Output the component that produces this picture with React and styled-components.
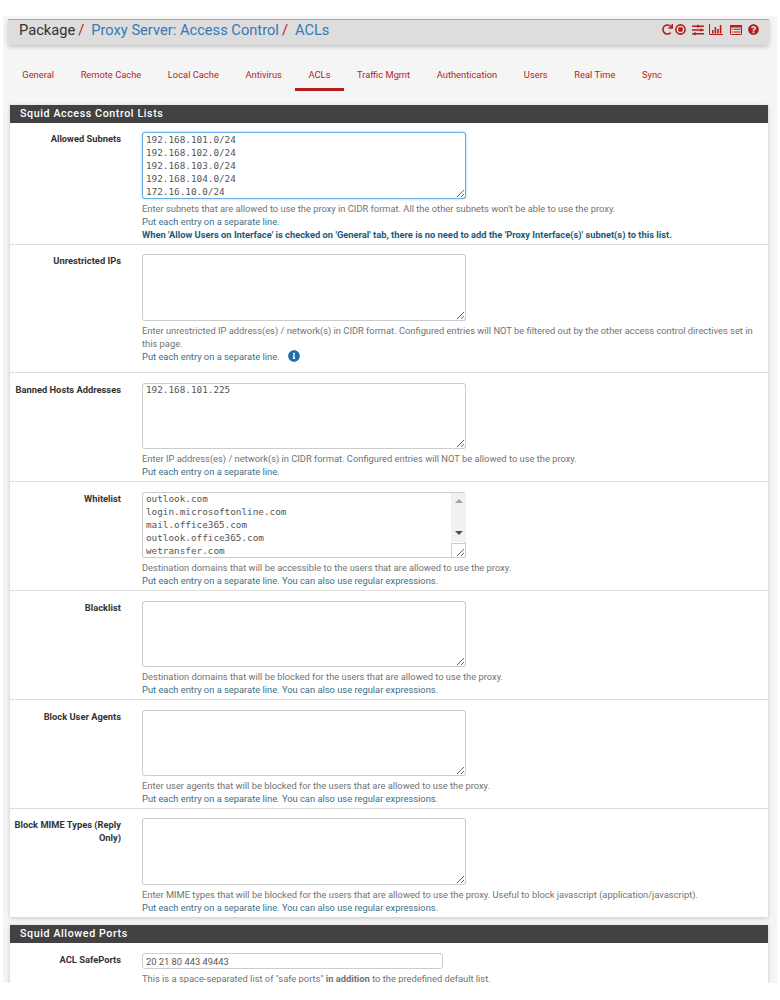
import React from 'react';
import styled, { createGlobalStyle } from 'styled-components';
import { FaRedo, FaSlidersH, FaQuestionCircle, FaInfoCircle } from 'react-icons/fa';

const GlobalStyle = createGlobalStyle`
	html, body {
		margin: 0;
		padding: 0;
		background: #fff;
		overflow: hidden;
		height: 1000px;
	}
	body {
		font-family: Roboto, "Liberation Sans", sans-serif;
	}
`;

const Page = styled.div`
	margin: 16px 3px 0;
	width: 774px;
	height: 967px;
	overflow: hidden;
	background: #f5f5f5;
	padding-top: 3px;
	box-sizing: border-box;
`;

const Header = styled.div`
	margin: 0 8px 0 5px;
	height: 26px;
	background: #ddd;
	border-top: 1px solid #aaa;
	border-radius: 0 0 4px 4px;
	box-shadow: 0 2px 4px rgba(0, 0, 0, 0.2);
	box-sizing: border-box;
	padding: 0 10px 6px 11px;
	display: flex;
	align-items: center;
	justify-content: space-between;
`;

const Crumbs = styled.div`
	display: flex;
	align-items: center;
	font-size: 14.67px;
	color: #333;
`;

const Crumb = styled.span`
	color: ${(p) => (p.$link ? '#337ab7' : '#333')};
`;

const Slash = styled.span`
	color: #b71c1c;
	margin: 0 7px 0 3px;
`;

const Icons = styled.div`
	display: flex;
	align-items: center;
	color: #b71c1c;
`;

const IconSlot = styled.span`
	display: inline-flex;
	margin-left: ${(p) => p.$gap}px;
`;

const Tabs = styled.div`
	display: flex;
	margin: 17px 0 14px 6px;
	height: 29px;
`;

const Tab = styled.div`
	padding: 0 13.3px;
	height: 29px;
	line-height: 25px;
	font-size: 9.33px;
	color: #b71c1c;
	box-sizing: border-box;
	border-bottom: 3px solid ${(p) => (p.$active ? '#b71c1c' : 'transparent')};
`;

const Panel = styled.section`
	margin: 0 9px 8px 7px;
	background: #fff;
	box-shadow: 0 1px 4px rgba(0, 0, 0, 0.2);
`;

const Heading = styled.h2`
	margin: 0;
	height: 18px;
	line-height: 18px;
	background: #424242;
	color: #fff;
	font-size: 10.67px;
	font-weight: 500;
	letter-spacing: 0.6px;
	padding-left: 10px;
`;

const Row = styled.div`
	display: flex;
	box-sizing: border-box;
	height: ${(p) => p.$height}px;
	padding: ${(p) => (p.$tight ? 9 : 10)}px 0 0 3px;
	border-bottom: 1px solid #ddd;

	&:last-child {
		border-bottom: 0;
	}
`;

const Label = styled.label`
	width: 108px;
	flex: none;
	text-align: right;
	font-size: 9.33px;
	font-weight: 700;
	line-height: 13px;
	color: #333;
	margin-right: 21px;
`;

const Field = styled.div`
	flex: 1;
	min-width: 0;
	padding-right: 14px;
`;

const AreaWrap = styled.div`
	position: relative;
	width: 324px;
	height: ${(p) => (p.$tight ? 67 : 66)}px;
`;

// top border comes from the inset shadow so the first line sits 1px higher
const Area = styled.textarea`
	display: block;
	width: 324px;
	height: ${(p) => (p.$tight ? 67 : 66)}px;
	box-sizing: border-box;
	margin: 0;
	padding: ${(p) => (p.$tight ? 1 : 0)}px 3px 0;
	font-family: "DejaVu Sans Mono", monospace;
	font-size: 9.33px;
	line-height: 13px;
	color: #555;
	background: #fff;
	border: 1px solid ${(p) => (p.$focus ? '#66afe9' : '#ccc')};
	border-top: 0;
	border-radius: 3px;
	outline: none;
	box-shadow: ${(p) =>
		p.$focus
			? 'inset 0 1px 0 #66afe9, 0 0 3px rgba(102,175,233,.6)'
			: 'inset 0 1px 0 #ccc'};
	overflow: hidden;
`;

const ScrollTrack = styled.div`
	position: absolute;
	top: 1px;
	right: 0;
	bottom: 16px;
	width: 15px;
	background: #f1f1f1;
	display: flex;
	flex-direction: column;
	align-items: center;
	justify-content: space-between;
	padding: 6px 0 7px;
	box-sizing: border-box;
`;

const Arrow = styled.span`
	width: 0;
	height: 0;
	border-left: 4px solid transparent;
	border-right: 4px solid transparent;
	border-${(p) => (p.$up ? 'bottom' : 'top')}: 4px solid ${(p) => (p.$up ? '#a3a3a3' : '#505050')};
`;

const ScrollCorner = styled.div`
	position: absolute;
	right: 0;
	bottom: 0;
	width: 15px;
	height: 15px;
	border-left: 1px solid #ccc;
	border-top: 1px solid #ccc;
	box-sizing: border-box;
	pointer-events: none;
`;

const TextInput = styled.input`
	display: block;
	width: 301px;
	height: 16px;
	box-sizing: border-box;
	margin: 0;
	padding: 0 3px;
	font-family: Roboto, sans-serif;
	font-size: 9.33px;
	color: #555;
	border: 1px solid #ccc;
	border-radius: 3px;
	outline: none;
`;

const Help = styled.div`
	margin-top: 3px;
	font-size: 9.33px;
	line-height: 13px;
	color: #737373;
`;

const Line = styled.div`
	color: ${(p) => (p.$strong ? '#1b5a7a' : p.$put ? '#3b6f8c' : '#737373')};
	font-weight: ${(p) => (p.$strong ? 700 : 400)};
`;

const Info = styled.span`
	display: inline-flex;
	vertical-align: -2px;
	margin-left: 8px;
	color: #1a6fa8;
`;

const StopIcon = () => (
	<svg width="11" height="11" viewBox="0 0 11 11">
		<circle cx="5.5" cy="5.5" r="4.6" fill="none" stroke="currentColor" strokeWidth="1.6" />
		<rect x="3.3" y="3.3" width="4.4" height="4.4" rx="1" fill="currentColor" />
	</svg>
);

const ChartIcon = () => (
	<svg width="14" height="11" viewBox="0 0 14 11">
		<path d="M0.5 0V10.5H14" fill="none" stroke="currentColor" />
		<path d="M3 6h1.6v3.5H3zM5.6 3h1.6v6.5H5.6zM8.2 5h1.6v4.5H8.2zM10.8 1h1.6v8.5h-1.6z" fill="currentColor" />
	</svg>
);

const ListIcon = () => (
	<svg width="12" height="10" viewBox="0 0 12 10">
		<rect x="0.5" y="0.5" width="11" height="9" rx="0.6" fill="none" stroke="currentColor" />
		<path d="M0 0h12v2.5H0z" fill="currentColor" />
		<path d="M1.5 3.8h1.2v1H1.5zM3.6 3.8h6.9v1H3.6zM1.5 6.4h1.2v1H1.5zM3.6 6.4h6.9v1H3.6z" fill="currentColor" />
	</svg>
);

const rows = [
	{
		label: 'Allowed Subnets',
		height: 122,
		tight: true,
		value: '192.168.101.0/24\n192.168.102.0/24\n192.168.103.0/24\n192.168.104.0/24\n172.16.10.0/24',
		focus: true,
		help: "Enter subnets that are allowed to use the proxy in CIDR format. All the other subnets won't be able to use the proxy.",
		put: 'Put each entry on a separate line.',
		strong: "When 'Allow Users on Interface' is checked on 'General' tab, there is no need to add the 'Proxy Interface(s)' subnet(s) to this list.",
	},
	{
		label: 'Unrestricted IPs',
		height: 128,
		tight: true,
		value: '',
		help: 'Enter unrestricted IP address(es) / network(s) in CIDR format. Configured entries will NOT be filtered out by the other access control directives set in this page.',
		put: 'Put each entry on a separate line.',
		info: true,
	},
	{
		label: 'Banned Hosts Addresses',
		height: 109,
		value: '192.168.101.225',
		help: 'Enter IP address(es) / network(s) in CIDR format. Configured entries will NOT be allowed to use the proxy.',
		put: 'Put each entry on a separate line.',
	},
	{
		label: 'Whitelist',
		height: 109,
		value: 'outlook.com\nlogin.microsoftonline.com\nmail.office365.com\noutlook.office365.com\nwetransfer.com',
		scroll: true,
		help: 'Destination domains that will be accessible to the users that are allowed to use the proxy.',
		put: 'Put each entry on a separate line. You can also use regular expressions.',
	},
	{
		label: 'Blacklist',
		height: 109,
		value: '',
		help: 'Destination domains that will be blocked for the users that are allowed to use the proxy.',
		put: 'Put each entry on a separate line. You can also use regular expressions.',
	},
	{
		label: 'Block User Agents',
		height: 109,
		value: '',
		help: 'Enter user agents that will be blocked for the users that are allowed to use the proxy.',
		put: 'Put each entry on a separate line. You can also use regular expressions.',
	},
	{
		label: 'Block MIME Types (Reply Only)',
		height: 108,
		tight: true,
		value: '',
		help: 'Enter MIME types that will be blocked for the users that are allowed to use the proxy. Useful to block javascript (application/javascript).',
		put: 'Put each entry on a separate line. You can also use regular expressions.',
	},
];

const tabs = ['General', 'Remote Cache', 'Local Cache', 'Antivirus', 'ACLs', 'Traffic Mgmt', 'Authentication', 'Users', 'Real Time', 'Sync'];

const App = () => {
	return (
		<>
			<GlobalStyle />
			<Page>
				<Header>
					<Crumbs>
						<Crumb>Package</Crumb>
						<Slash>/</Slash>
						<Crumb $link>Proxy Server: Access Control</Crumb>
						<Slash>/</Slash>
						<Crumb $link>ACLs</Crumb>
					</Crumbs>
					<Icons>
						<IconSlot $gap={0}><FaRedo size={11} /></IconSlot>
						<IconSlot $gap={2}><StopIcon /></IconSlot>
						<IconSlot $gap={6}><FaSlidersH size={12} /></IconSlot>
						<IconSlot $gap={5}><ChartIcon /></IconSlot>
						<IconSlot $gap={7}><ListIcon /></IconSlot>
						<IconSlot $gap={6}><FaQuestionCircle size={11} /></IconSlot>
					</Icons>
				</Header>
				<Tabs>
					{tabs.map((t) => (
						<Tab key={t} $active={t === 'ACLs'}>
							{t}
						</Tab>
					))}
				</Tabs>
				<Panel>
					<Heading>Squid Access Control Lists</Heading>
					{rows.map((r) => (
						<Row key={r.label} $height={r.height} $tight={r.tight}>
							<Label>{r.label}</Label>
							<Field>
								<AreaWrap $tight={r.tight}>
									<Area readOnly defaultValue={r.value} $focus={r.focus} $tight={r.tight} />
									{r.scroll && (
										<>
											<ScrollTrack>
												<Arrow $up />
												<Arrow />
											</ScrollTrack>
											<ScrollCorner />
										</>
									)}
								</AreaWrap>
								<Help>
									<Line>{r.help}</Line>
									<Line $put>
										{r.put}
										{r.info && (
											<Info>
												<FaInfoCircle size={12} />
											</Info>
										)}
									</Line>
									{r.strong && <Line $strong>{r.strong}</Line>}
								</Help>
							</Field>
						</Row>
					))}
				</Panel>
				<Panel>
					<Heading>Squid Allowed Ports</Heading>
					<Row $height={60}>
						<Label>ACL SafePorts</Label>
						<Field>
							<TextInput readOnly defaultValue="20 21 80 443 49443" />
							<Help>
								This is a space-separated list of "safe ports" <b>in addition</b> to the predefined default list.
							</Help>
						</Field>
					</Row>
				</Panel>
			</Page>
		</>
	);
};

export default App;
